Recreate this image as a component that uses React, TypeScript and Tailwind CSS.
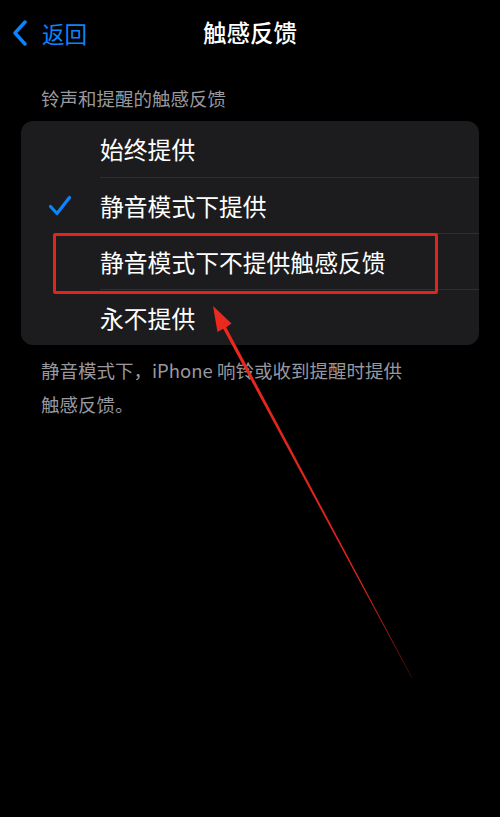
import React from "react";

const options = [
  { label: "始终提供", checked: false },
  { label: "静音模式下提供", checked: true },
  { label: "静音模式下不提供触感反馈", checked: false },
  { label: "永不提供", checked: false },
];

function Check() {
  return (
    <svg width="24" height="21" viewBox="0 0 24 21" fill="none">
      <path d="M2.5 11.5 L9 18.5 L21.5 2.5" stroke="#0a84ff" strokeWidth="3.2" strokeLinecap="round" strokeLinejoin="round" />
    </svg>
  );
}

export default function App() {
  return (
    <div
      className="relative min-h-[817px] w-[500px] overflow-hidden bg-black text-white"
      style={{ fontFamily: '"Noto Sans CJK SC", "Noto Sans", sans-serif' }}
    >
      {/* nav bar */}
      <div className="grid h-[66px] grid-cols-[1fr_auto_1fr] items-center">
        <div className="flex items-center gap-[14px] pl-[12px] text-[#0a84ff]">
          <svg width="16" height="26" viewBox="0 0 16 26" fill="none">
            <path d="M13 2 L3 13 L13 24" stroke="#0a84ff" strokeWidth="3.4" strokeLinecap="round" strokeLinejoin="round" />
          </svg>
          <span className="text-[22.5px] leading-none">返回</span>
        </div>
        <h1 className="text-[23.5px] font-medium leading-none">触感反馈</h1>
        <div />
      </div>

      {/* section header */}
      <div className="px-[41px] pt-[21px] pb-[12px] text-[18.5px] leading-[22px] text-[#98989e]">
        铃声和提醒的触感反馈
      </div>

      {/* options card */}
      <div className="mx-[21px] overflow-hidden rounded-[12px] bg-[#1c1c1e]">
        {options.map((o, i) => (
          <div key={i} className="flex h-[56px] items-stretch">
            <div className="flex w-[79px] items-center pl-[27px]">{o.checked && <Check />}</div>
            <div
              className={
                "flex flex-1 items-center text-[23.8px] leading-none " +
                (i > 0 ? "border-t border-[#2f2f33]" : "")
              }
            >
              {o.label}
            </div>
          </div>
        ))}
      </div>

      {/* footer note */}
      <p className="mt-[8px] px-[41px] text-[18.5px] leading-[34px] text-[#98989e]">
        静音模式下，iPhone 响铃或收到提醒时提供
        <br />
        触感反馈。
      </p>

      {/* annotation: red box */}
      <div className="absolute left-[53px] top-[233px] h-[61px] w-[385px] rounded-[2px] border-[3px] border-[#e1251b]" />

      {/* annotation: arrow */}
      <svg className="pointer-events-none absolute left-0 top-0" width="500" height="817" viewBox="0 0 500 817">
        <defs>
          <linearGradient id="fade" x1="213" y1="306" x2="412" y2="678" gradientUnits="userSpaceOnUse">
            <stop offset="0" stopColor="#ec2a1f" />
            <stop offset="0.75" stopColor="#d8221a" />
            <stop offset="1" stopColor="#5a0d08" />
          </linearGradient>
        </defs>
        <polygon
          points="213,306 231.5,323.5 226.2,327.2 412.3,678 411.7,678.1 223.2,328.8 217.5,332"
          fill="url(#fade)"
        />
      </svg>
    </div>
  );
}
